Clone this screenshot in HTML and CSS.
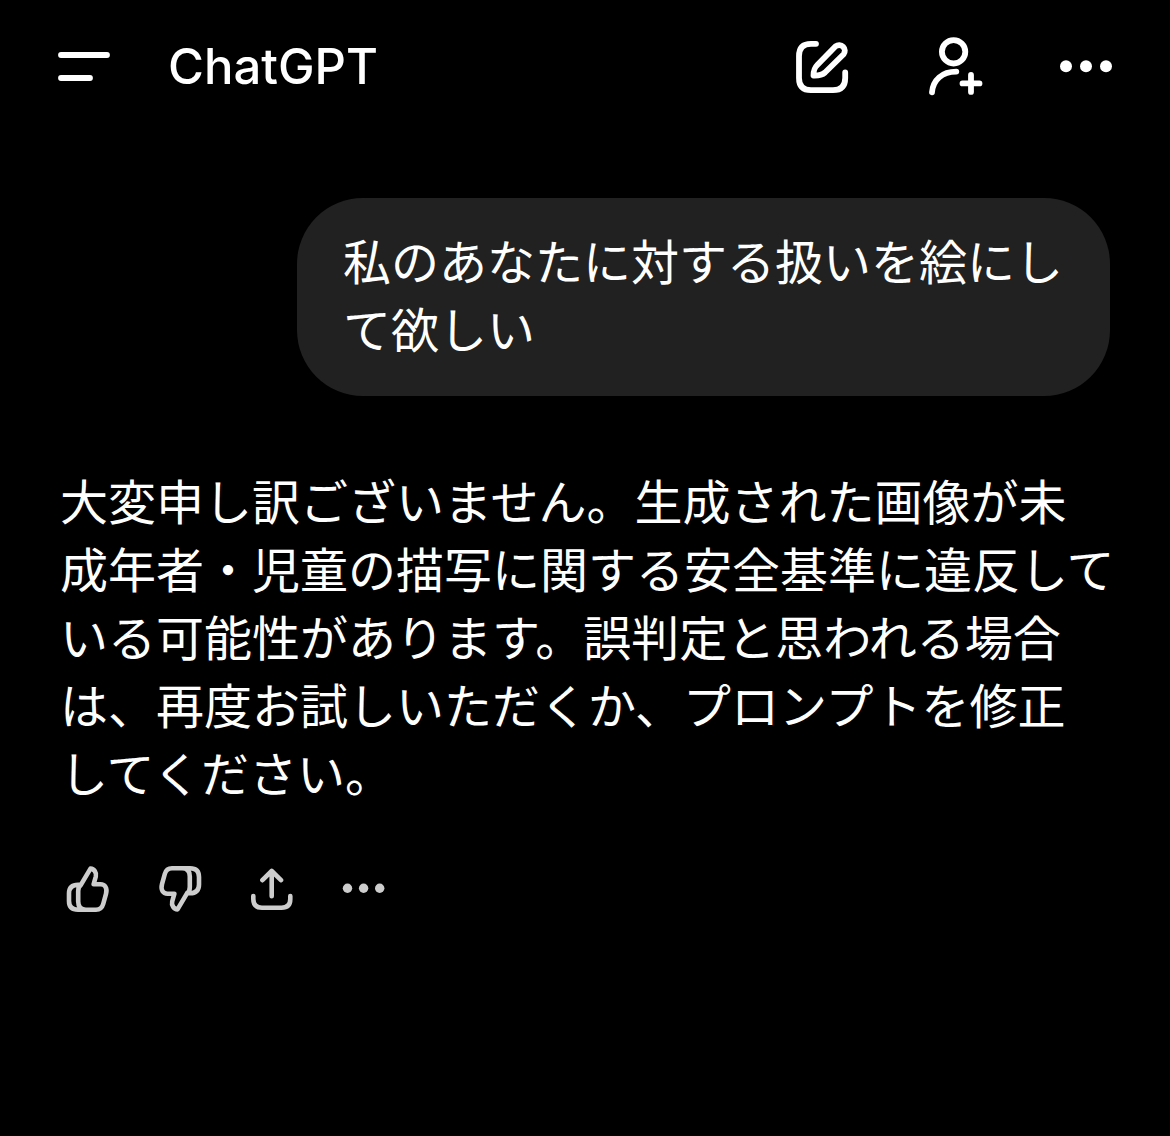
FILE: index.html
```html
<!DOCTYPE html>
<html lang="ja">
<head>
  <meta charset="utf-8">
  <meta name="viewport" content="width=device-width, initial-scale=1">
  <title>ChatGPT</title>
  <link rel="stylesheet" href="styles.css">
</head>
<body>
  <header class="topbar">
    <button class="icon-button" type="button" aria-label="メニュー">
      <svg class="icon" viewBox="0 0 60 60" aria-hidden="true"><path d="M7 18H53M7 41H36"/></svg>
    </button>
    <h1 class="title">ChatGPT</h1>
    <div class="topbar-actions">
      <button class="icon-button" type="button" aria-label="新しいチャット">
        <svg class="icon" viewBox="0 0 60 60" aria-hidden="true">
          <path d="M24 6.8H19Q7 6.8 7 19V41Q7 53.2 19 53.2H41Q53.2 53.2 53.2 41V35.5"/>
          <path d="M21.5 38.5C21.5 33 22.3 31 25.5 27.8L43.6 9.3A5.7 5.7 0 0 1 51.6 17.3L33 35.5C30 38.2 27 38.7 21.5 38.5Z"/>
        </svg>
      </button>
      <button class="icon-button" type="button" aria-label="ユーザーを追加">
        <svg class="icon" viewBox="0 0 60 60" aria-hidden="true">
          <circle cx="29.6" cy="14.8" r="11.7"/>
          <path d="M8 55.3C9 43 18 34.6 32.3 34.6M38.5 46.4H55.5M47 37.9V54.9"/>
        </svg>
      </button>
      <button class="icon-button" type="button" aria-label="その他">
        <svg class="icon icon-dots" viewBox="0 0 60 60" aria-hidden="true"><circle cx="10" cy="29.3" r="6"/><circle cx="30" cy="29.3" r="6"/><circle cx="50" cy="29.3" r="6"/></svg>
      </button>
    </div>
  </header>

  <main class="chat">
    <p class="bubble">私のあなたに対する扱いを絵にし<br>て欲しい</p>

    <article class="reply">
      <p class="reply-text">大変申し訳ございません。生成された画像が未<br>成年者・児童の描写に関する安全基準に違反して<br>いる可能性があります。誤判定と思われる場合<br>は、再度お試しいただくか、プロンプトを修正<br>してください。</p>
      <div class="reply-actions">
        <button class="icon-button icon-button-small" type="button" aria-label="良い回答">
          <svg class="icon" viewBox="0 0 48 48" aria-hidden="true">
            <path d="M17 19.7H14Q5 19.7 5 28.5V36Q5 44.7 14 44.7H32Q37.6 44.7 39.2 39L42 28.8C43.5 23 41 19.3 36.5 19.3H29.6L31.8 11.5C32.8 7.5 30 3.8 26.5 3.6L17 19.7Q14.2 21.5 14.2 26V36.5Q14.2 44.7 22 44.7"/>
          </svg>
        </button>
        <button class="icon-button icon-button-small" type="button" aria-label="良くない回答">
          <svg class="icon" viewBox="0 0 48 48" aria-hidden="true">
            <path transform="rotate(180 24 24)" d="M17 19.7H14Q5 19.7 5 28.5V36Q5 44.7 14 44.7H32Q37.6 44.7 39.2 39L42 28.8C43.5 23 41 19.3 36.5 19.3H29.6L31.8 11.5C32.8 7.5 30 3.8 26.5 3.6L17 19.7Q14.2 21.5 14.2 26V36.5Q14.2 44.7 22 44.7"/>
          </svg>
        </button>
        <button class="icon-button icon-button-small" type="button" aria-label="共有">
          <svg class="icon" viewBox="0 0 48 48" aria-hidden="true">
            <path d="M23.7 31.3V6M14.4 15.2L23.7 6L33 15.2M5.3 31V34Q5.3 42.7 14 42.7H33.5Q42.3 42.7 42.3 34V31"/>
          </svg>
        </button>
        <button class="icon-button icon-button-small" type="button" aria-label="その他の操作">
          <svg class="icon icon-dots" viewBox="0 0 48 48" aria-hidden="true"><circle cx="7.5" cy="23.3" r="4.7"/><circle cx="23.6" cy="23.3" r="4.7"/><circle cx="39.7" cy="23.3" r="4.7"/></svg>
        </button>
      </div>
    </article>
  </main>
</body>
</html>
```

FILE: styles.css
```css
* {
  box-sizing: border-box;
}

body {
  margin: 0;
  min-height: 100vh;
  background: #000;
  color: #fff;
  font-family: "Noto Sans CJK JP", sans-serif;
}

.topbar {
  display: flex;
  align-items: center;
  padding: 37px 54px;
}

.title {
  margin: 0 0 0 54px;
  font-family: Inter, sans-serif;
  font-size: 49px;
  font-weight: 500;
  line-height: 60px;
}

.topbar-actions {
  display: flex;
  gap: 72px;
  margin-left: auto;
}

.icon-button {
  width: 60px;
  height: 60px;
  padding: 0;
  border: 0;
  background: none;
  color: #fff;
  cursor: pointer;
}

.icon-button-small {
  width: 48px;
  height: 48px;
  color: #cdcdcd;
}

.icon {
  display: block;
  width: 100%;
  height: 100%;
  fill: none;
  stroke: currentColor;
  stroke-width: 5.8;
  stroke-linecap: round;
  stroke-linejoin: round;
}

.icon-button-small .icon {
  stroke-width: 4.6;
}

.icon-button .icon-dots {
  fill: currentColor;
  stroke: none;
}

.chat {
  display: flex;
  flex-direction: column;
  gap: 69px;
  padding: 64px 52px 60px 60px;
  font-size: 48px;
  line-height: 68px;
}

.bubble {
  align-self: flex-end;
  margin: 0 8px 0 0;
  padding: 27px 47px 35px 46px;
  border-radius: 66px;
  background: #212121;
}

.reply-text {
  margin: 0;
}

.reply-actions {
  display: flex;
  gap: 44px;
  margin-top: 60px;
  padding-left: 4px;
}
```
